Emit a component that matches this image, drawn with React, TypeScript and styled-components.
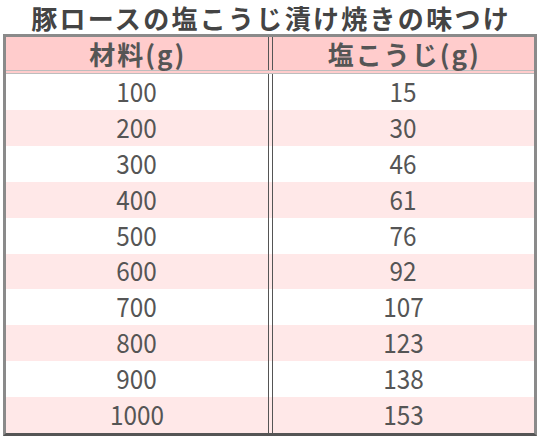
import React from "react";
import styled, { createGlobalStyle } from "styled-components";

const GlobalStyle = createGlobalStyle`
  html, body {
    margin: 0;
    padding: 0;
    background: #ffffff;
  }
  body {
    font-family: "Noto Sans CJK JP", "Noto Sans", sans-serif;
  }
`;

const Page = styled.div`
  width: 541px;
  height: 442px;
  box-sizing: border-box;
  padding: 0 4px 0 3px;
  display: flex;
  flex-direction: column;
`;

const Title = styled.h1`
  margin: 0;
  padding: 2px 0 0;
  line-height: 32px;
  text-align: center;
  font-family: "Noto Sans CJK JP", sans-serif;
  font-size: 26px;
  font-weight: 700;
  letter-spacing: 2.3px;
  text-indent: 2.3px;
  color: #444444;
  white-space: nowrap;
`;

const Table = styled.div`
  width: 534px;
  box-sizing: border-box;
  border: 3px solid #8a8a8a;
  border-bottom-color: #555555;
  display: flex;
  flex-direction: column;
`;

const HeaderRow = styled.div`
  display: grid;
  grid-template-columns: 1fr 1fr;
  column-gap: 3px;
  height: 37px;
  box-sizing: border-box;
  background: #ffcccc;
  border-bottom: 4px double #bdbdbd;
`;

const HeaderCell = styled.div<{ $side: "left" | "right" }>`
  display: flex;
  align-items: center;
  justify-content: center;
  ${(p) => (p.$side === "left" ? "border-right" : "border-left")}: 1px solid #555555;
  font-family: "Noto Sans CJK JP", sans-serif;
  font-size: 26px;
  font-weight: 700;
  letter-spacing: 2px;
  text-indent: 2px;
  color: #555555;
  line-height: 1;
`;

const Body = styled.div`
  display: flex;
  flex-direction: column;
  height: 359px;
`;

const Row = styled.div<{ $alt: boolean }>`
  flex: 1;
  display: grid;
  grid-template-columns: 1fr 1fr;
  column-gap: 3px;
  background: ${(p) => (p.$alt ? "#ffe8e8" : "#ffffff")};
`;

const Cell = styled.div<{ $side: "left" | "right" }>`
  display: flex;
  align-items: center;
  justify-content: center;
  ${(p) => (p.$side === "left" ? "border-right" : "border-left")}: 1px solid #555555;
`;

const Num = styled.span`
  display: inline-block;
  font-family: "Noto Sans CJK JP", sans-serif;
  font-size: 27px;
  color: #555555;
  line-height: 1;
  transform: scaleX(0.9);
  margin-top: -3px;
`;

const data: [number, number][] = [
  [100, 15],
  [200, 30],
  [300, 46],
  [400, 61],
  [500, 76],
  [600, 92],
  [700, 107],
  [800, 123],
  [900, 138],
  [1000, 153],
];

export default function App() {
  return (
    <>
      <GlobalStyle />
      <Page>
        <Title>豚ロースの塩こうじ漬け焼きの味つけ</Title>
        <Table>
          <HeaderRow>
            <HeaderCell $side="left">材料(g)</HeaderCell>
            <HeaderCell $side="right">塩こうじ(g)</HeaderCell>
          </HeaderRow>
          <Body>
            {data.map(([meat, koji], i) => (
              <Row key={meat} $alt={i % 2 === 1}>
                <Cell $side="left">
                  <Num>{meat}</Num>
                </Cell>
                <Cell $side="right">
                  <Num>{koji}</Num>
                </Cell>
              </Row>
            ))}
          </Body>
        </Table>
      </Page>
    </>
  );
}
